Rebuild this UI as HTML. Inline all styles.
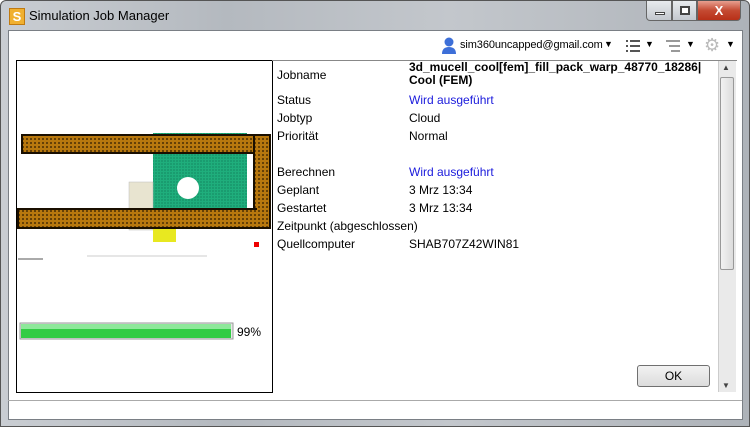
<!DOCTYPE html>
<html><head><meta charset="utf-8"><style>
*{margin:0;padding:0;box-sizing:border-box}
body{width:750px;height:427px;overflow:hidden;font-family:"Liberation Sans",sans-serif;font-size:12px;color:#000;background:#fff}
.win{position:absolute;left:0;top:0;width:750px;height:427px;background:linear-gradient(90deg,#c9cdd2,#b4b9bf 30%,#c3c7cc 60%,#aeb3b9);border:1px solid #555;border-radius:6px 6px 0 0}
.title{position:absolute;left:28px;top:7px;font-size:13px;color:#000}
.icon{position:absolute;left:8px;top:7px;width:16px;height:17px;background:#f0b030;border:1px solid #c07a10;color:#fff;font-weight:bold;font-size:13px;text-align:center;line-height:15px}
.btn{position:absolute;top:0;height:20px;border:1px solid #666;border-top:none}
.client{position:absolute;left:7px;top:29px;width:735px;height:390px;background:#fff;border:1px solid #7a7f85}
.abs{position:absolute}
.row{position:absolute;left:277px}
.val{position:absolute;left:409px}
.blue{color:#1a1adc}
</style></head><body>
<div class="win">
<div class="icon">S</div>
<div class="title">Simulation Job Manager</div>
<div class="btn" style="left:645px;width:26px;background:linear-gradient(#e8ebee,#c3c8ce);border-radius:0 0 0 4px"><div class="abs" style="left:8px;top:11px;width:10px;height:3px;background:#fff;border:1px solid #444"></div></div>
<div class="btn" style="left:671px;width:25px;background:linear-gradient(#e8ebee,#c3c8ce)"><div class="abs" style="left:7px;top:5px;width:10px;height:9px;border:2px solid #444;background:#fff"></div></div>
<div class="btn" style="left:696px;width:44px;background:linear-gradient(#e8a090,#c44a32 50%,#b83018);border-radius:0 0 4px 0;color:#fff;font-weight:bold;text-align:center;font-size:13px;line-height:19px">X</div>
<div class="client">
</div>
</div>
<!-- toolbar -->
<svg class="abs" style="left:441px;top:37px" width="16" height="18"><circle cx="8" cy="5" r="4.5" fill="#3d6fd8"/><path d="M1 17 Q1 10 8 10 Q15 10 15 17Z" fill="#3d6fd8"/></svg>
<div class="abs" style="left:460px;top:39px;font-size:11px;letter-spacing:-0.1px">sim360uncapped@gmail.com</div>
<div class="abs" style="left:604px;top:39px;font-size:9px">▼</div>
<svg class="abs" style="left:626px;top:40px" width="16" height="12"><g fill="#555"><rect x="0" y="0" width="2" height="2"/><rect x="0" y="5" width="2" height="2"/><rect x="0" y="10" width="2" height="2"/><rect x="4" y="0" width="10" height="2"/><rect x="4" y="5" width="10" height="2"/><rect x="4" y="10" width="10" height="2"/></g></svg>
<div class="abs" style="left:645px;top:39px;font-size:9px">▼</div>
<svg class="abs" style="left:666px;top:40px" width="16" height="12"><g fill="#999"><rect x="0" y="0" width="14" height="2"/><rect x="3" y="5" width="11" height="2"/><rect x="5" y="10" width="9" height="2"/></g></svg>
<div class="abs" style="left:686px;top:39px;font-size:9px">▼</div>
<div class="abs" style="left:704px;top:35px;font-size:18px;color:#bbb">⚙</div>
<div class="abs" style="left:726px;top:39px;font-size:9px">▼</div>
<!-- left panel -->
<div class="abs" style="left:16px;top:60px;width:257px;height:333px;border:1px solid #000;background:#fff"></div>
<svg class="abs" style="left:17px;top:61px" width="255" height="331">
<defs><pattern id="p" width="4" height="4" patternUnits="userSpaceOnUse"><rect width="4" height="4" fill="#b8780e"/><circle cx="2" cy="2" r="1" fill="#4a2e03"/></pattern>
<pattern id="g" width="3" height="3" patternUnits="userSpaceOnUse"><rect width="3" height="3" fill="#1fae7c"/><circle cx="1" cy="1" r="0.6" fill="#0d7050"/></pattern></defs>
<rect x="136" y="72" width="94" height="96" fill="url(#g)"/>
<circle cx="171" cy="127" r="11" fill="#fff"/>
<rect x="112" y="121" width="24" height="48" fill="#e8e4d0" stroke="#bbb" stroke-width="0.5"/>
<rect x="136" y="168" width="23" height="13" fill="#e8e820"/>
<rect x="5" y="74" width="248" height="18" fill="url(#p)" stroke="#1a0f00" stroke-width="2"/>
<rect x="237" y="74" width="16" height="92" fill="url(#p)" stroke="#1a0f00" stroke-width="2"/>
<rect x="1" y="148" width="252" height="19" fill="url(#p)" stroke="#1a0f00" stroke-width="2"/>
<rect x="240" y="75" width="12" height="90" fill="url(#p)"/>
<rect x="237" y="181" width="5" height="5" fill="#e00"/>
<line x1="70" y1="195" x2="190" y2="195" stroke="#999" stroke-width="0.6"/>
<rect x="1" y="197" width="25" height="2" fill="#aaa"/>
<rect x="3" y="262" width="213" height="16" fill="#e8e8e8" stroke="#999"/>
<rect x="4" y="263" width="210" height="14" fill="#33cc44"/>
<rect x="4" y="263" width="210" height="5" fill="#8ee89a"/>
</svg>
<div class="abs" style="left:237px;top:325px">99%</div>
<!-- right panel -->
<div class="abs" style="left:272px;top:60px;width:465px;height:333px;border-top:1px solid #888"></div>
<div class="abs" style="left:718px;top:61px;width:18px;height:331px;background:#eaeaea;border-left:1px solid #ccc"></div>
<div class="abs" style="left:720px;top:77px;width:14px;height:193px;background:linear-gradient(90deg,#f2f2f2,#dcdcdc);border:1px solid #999;border-radius:2px"></div>
<div class="abs" style="left:722px;top:63px;font-size:8px;color:#444">▲</div>
<div class="abs" style="left:722px;top:381px;font-size:8px;color:#444">▼</div>
<div class="row" style="top:68px">Jobname</div>
<div class="val" style="top:61px;font-weight:bold;line-height:13px">3d_mucell_cool[fem]_fill_pack_warp_48770_18286|<br>Cool (FEM)</div>
<div class="row" style="top:93px">Status</div><div class="val blue" style="top:93px">Wird ausgeführt</div>
<div class="row" style="top:111px">Jobtyp</div><div class="val" style="top:111px">Cloud</div>
<div class="row" style="top:129px">Priorität</div><div class="val" style="top:129px">Normal</div>
<div class="row" style="top:165px">Berechnen</div><div class="val blue" style="top:165px">Wird ausgeführt</div>
<div class="row" style="top:183px">Geplant</div><div class="val" style="top:183px">3 Mrz 13:34</div>
<div class="row" style="top:201px">Gestartet</div><div class="val" style="top:201px">3 Mrz 13:34</div>
<div class="row" style="top:219px">Zeitpunkt (abgeschlossen)</div>
<div class="row" style="top:237px">Quellcomputer</div><div class="val" style="top:237px">SHAB707Z42WIN81</div>
<div class="abs" style="left:637px;top:365px;width:73px;height:22px;border:1px solid #707070;border-radius:3px;background:linear-gradient(#f2f2f2,#dcdcdc);text-align:center;line-height:20px">OK</div>
<div class="abs" style="left:8px;top:400px;width:734px;height:1px;background:#aaa"></div>
</body></html>
